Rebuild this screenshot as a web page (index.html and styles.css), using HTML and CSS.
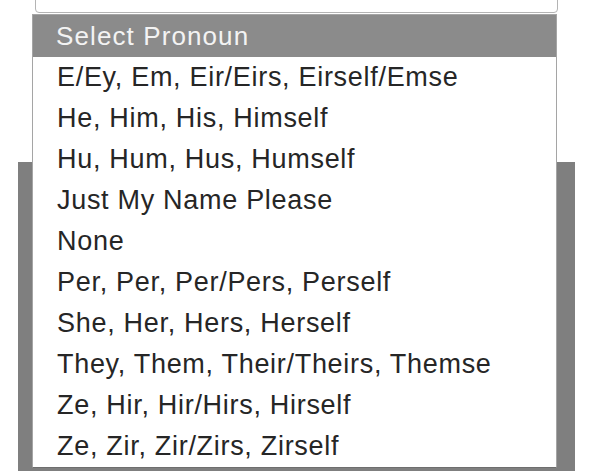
FILE: index.html
```html
<!DOCTYPE html>
<html>
<head>
  <title>Select Pronoun</title>
  <link rel="stylesheet" href="styles.css">
</head>
<body>
  <div class="field">
    <div class="select-box"></div>
    <div class="backdrop"></div>

    <ul class="dropdown">
      <li class="option option-selected">Select Pronoun</li>
      <li class="option">E/Ey, Em, Eir/Eirs, Eirself/Emse</li>
      <li class="option">He, Him, His, Himself</li>
      <li class="option">Hu, Hum, Hus, Humself</li>
      <li class="option">Just My Name Please</li>
      <li class="option">None</li>
      <li class="option">Per, Per, Per/Pers, Perself</li>
      <li class="option">She, Her, Hers, Herself</li>
      <li class="option">They, Them, Their/Theirs, Themse</li>
      <li class="option">Ze, Hir, Hir/Hirs, Hirself</li>
      <li class="option">Ze, Zir, Zir/Zirs, Zirself</li>
    </ul>
  </div>
</body>
</html>
```

FILE: styles.css
```css
body {
  margin: 0;
  background-color: #ffffff;
  font-family: 'Liberation Sans', Arial, sans-serif;
}

.field {
  position: relative;
  width: 600px;
  height: 471px;
  overflow: hidden;
}

/* the closed select, mostly scrolled out of view */
.select-box {
  margin-top: -29px;
  margin-left: 35px;
  width: 521px;
  height: 40px;
  border: 1px solid #b4b4b4;
  border-radius: 4px;
  background-color: #ffffff;
}

.backdrop {
  margin-top: 149px;
  margin-left: 18px;
  width: 557px;
  height: 320px;
  background-color: #7f7f7f;
}

/* open option list */
.dropdown {
  position: absolute;
  top: 14px;
  left: 32px;
  width: 523px;
  margin: 0;
  padding: 0;
  list-style: none;
  background-color: #ffffff;
  border: 1px solid #a5a5a5;
  border-bottom-color: #6e6e6e;
}

.option {
  height: 41px;
  line-height: 41px;
  padding-left: 24px;
  font-size: 27px;
  letter-spacing: 0.7px;
  color: #262626;
  white-space: nowrap;
  overflow: hidden;
}

.option-selected {
  height: 42px;
  line-height: 42px;
  padding-left: 23px;
  font-size: 26px;
  letter-spacing: 1.1px;
  background-color: #8b8b8b;
  color: #f3f3f3;
}
```
